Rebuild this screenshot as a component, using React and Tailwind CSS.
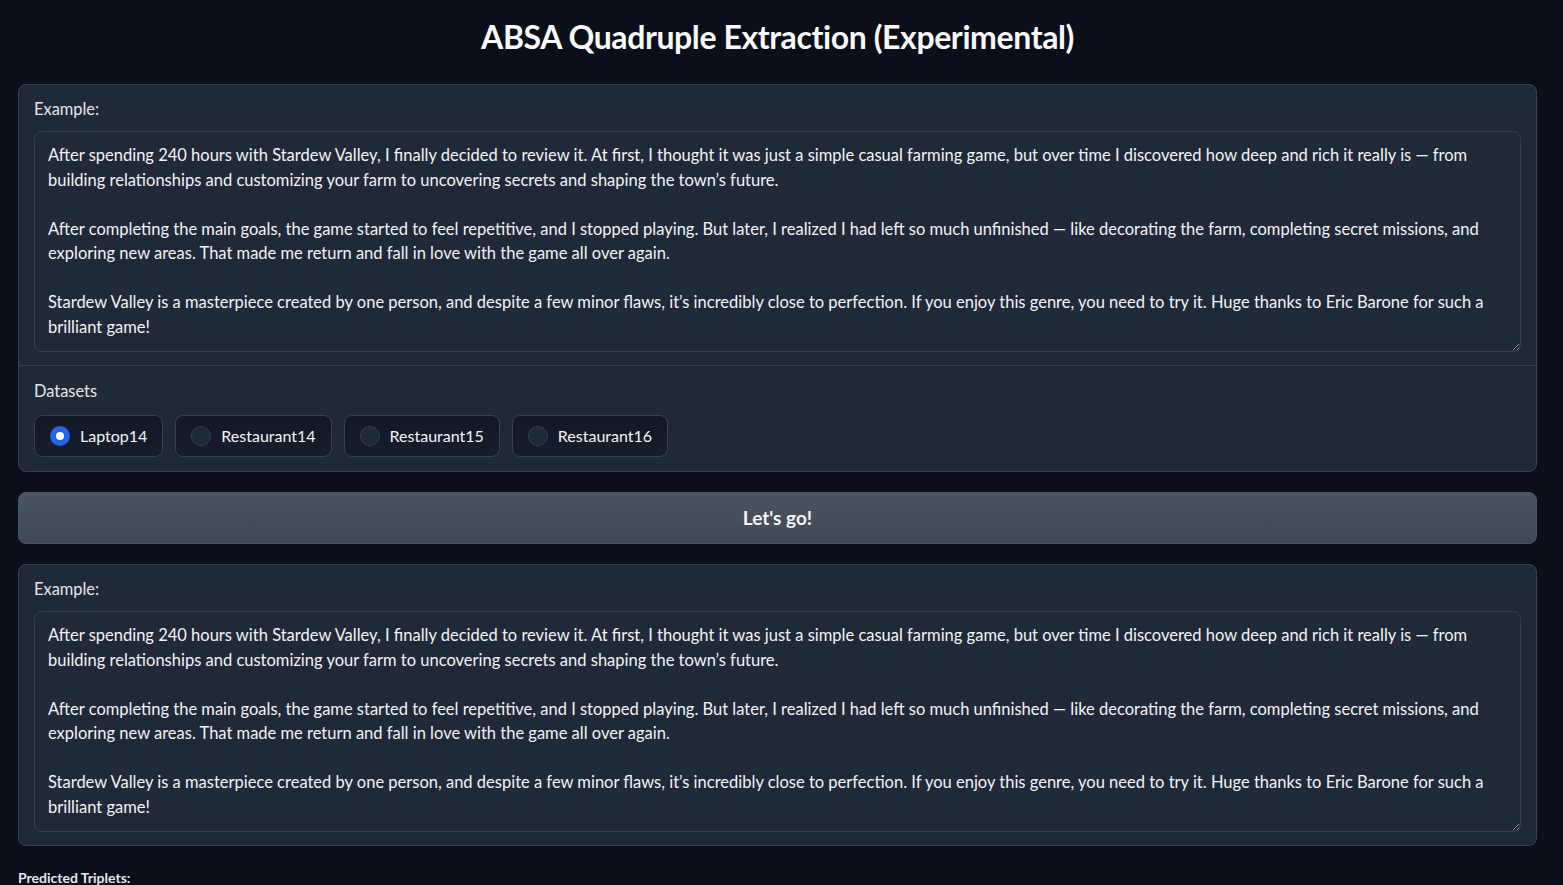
import React, { useState } from "react";

const REVIEW = `After spending 240 hours with Stardew Valley, I finally decided to review it. At first, I thought it was just a simple casual farming game, but over time I discovered how deep and rich it really is — from building relationships and customizing your farm to uncovering secrets and shaping the town’s future.

After completing the main goals, the game started to feel repetitive, and I stopped playing. But later, I realized I had left so much unfinished — like decorating the farm, completing secret missions, and exploring new areas. That made me return and fall in love with the game all over again.

Stardew Valley is a masterpiece created by one person, and despite a few minor flaws, it’s incredibly close to perfection. If you enjoy this genre, you need to try it. Huge thanks to Eric Barone for such a brilliant game!`;

const DATASETS = ["Laptop14", "Restaurant14", "Restaurant15", "Restaurant16"];

const font = { fontFamily: "Lato, 'Noto Sans', sans-serif" };

const ExampleBox = () => (
  <div className="px-[15px] pt-[14px] pb-[13px]">
    <div className="text-[16.4px] text-gray-200 mb-[12px] leading-[20px]">Example:</div>
    <textarea
      readOnly
      value={REVIEW}
      className="block w-full h-[221px] resize-y rounded-lg border border-[#374151] bg-[#1f2937] px-[13px] py-[11px] text-[16.5px] leading-[24.5px] text-gray-100 outline-none"
      style={font}
    />
  </div>
);

export default function App() {
  const [dataset, setDataset] = useState("Laptop14");

  return (
    <div className="min-h-screen bg-[#0b0f19] pl-[18px] pr-[26px] pb-4" style={font}>
      <h1 className="pt-[16px] pb-[26px] text-center text-[32px] font-bold leading-[42px] text-gray-50 tracking-[-0.4px]">
        ABSA Quadruple Extraction (Experimental)
      </h1>

      {/* input block */}
      <div className="rounded-lg border border-[#374151] bg-[#1f2937]">
        <ExampleBox />
        <div className="border-t border-[#374151] px-[15px] pt-[15px] pb-[14px]">
          <div className="text-[16.4px] text-gray-200 leading-[20px] mb-[14px]">Datasets</div>
          <div className="flex gap-[12px]">
            {DATASETS.map((d) => (
              <label
                key={d}
                onClick={() => setDataset(d)}
                className="flex h-[42px] cursor-pointer items-center gap-[10px] rounded-lg border border-[#374151] bg-gradient-to-b from-[#111827] to-[#161e2c] pl-[15px] pr-[15px] text-[16px] text-gray-100"
              >
                {dataset === d ? (
                  <span className="flex h-[20px] w-[20px] items-center justify-center rounded-full bg-[#2563eb]">
                    <span className="h-[8px] w-[8px] rounded-full bg-white" />
                  </span>
                ) : (
                  <span className="h-[20px] w-[20px] rounded-full border border-[#374151] bg-[#1f2937]" />
                )}
                {d}
              </label>
            ))}
          </div>
        </div>
      </div>

      <button className="mt-[20px] block h-[52px] w-full rounded-lg border border-[#4b5563] bg-gradient-to-b from-[#4b5563] to-[#3f4956] text-[19px] font-bold text-gray-100">
        Let's go!
      </button>

      {/* output block */}
      <div className="mt-[20px] rounded-lg border border-[#374151] bg-[#1f2937]">
        <ExampleBox />
      </div>

      <div className="mt-[21px] text-[14px] font-bold text-gray-200">Predicted Triplets:</div>
    </div>
  );
}
